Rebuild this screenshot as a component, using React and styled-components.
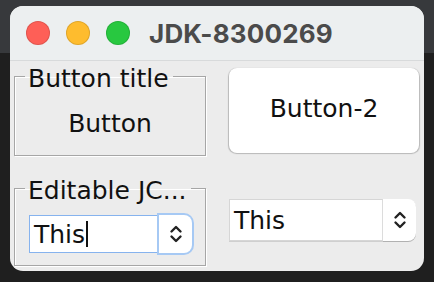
import React from "react";
import styled, { createGlobalStyle } from "styled-components";

const GlobalStyle = createGlobalStyle`
  html, body {
    margin: 0;
    padding: 0;
  }
  body {
    width: 434px;
    height: 282px;
    overflow: hidden;
    background: linear-gradient(#37393c 0, #37393c 53px, #1f1f1f 53px);
  }
  #root {
    padding: 6px 10px 0;
  }
`;

const Window = styled.div`
  width: 414px;
  height: 265px;
  border-radius: 13px;
  overflow: hidden;
  background: #ececec;
  display: flex;
  flex-direction: column;
  font-family: "DejaVu Sans", sans-serif;
  color: #111;
`;

const TitleBar = styled.div`
  height: 54px;
  flex: none;
  background: #eceff0;
  border-bottom: 1px solid #d8dadb;
  display: flex;
  align-items: center;
  padding-left: 16px;
  gap: 16px;
`;

const Light = styled.span`
  width: 24px;
  height: 24px;
  border-radius: 50%;
  background: ${({ color }) => color};
  box-shadow: inset 0 0 0 1px rgba(0, 0, 0, 0.12);
`;

const Title = styled.div`
  margin-left: 3px;
  font-family: Inter, "Liberation Sans", sans-serif;
  font-weight: 700;
  font-size: 26px;
  letter-spacing: 0.2px;
  color: #4b4b4b;
`;

const Content = styled.div`
  flex: 1;
  display: grid;
  grid-template-columns: 192px 190px;
  grid-template-rows: 95px 93px;
  column-gap: 22px;
  row-gap: 17px;
  padding: 0 0 0 4px;
`;

const Group = styled.fieldset`
  margin: 0;
  padding: 0 0 0 10px;
  border: 1px solid #a6a6a6;
  box-shadow: inset 1px 1px 0 #fff, 1px 1px 0 #fff;
  display: flex;
  align-items: flex-start;
  height: ${({ h }) => h}px;
  box-sizing: border-box;
`;

const Legend = styled.legend`
  margin-left: 0;
  padding: 6px 4px 0 3px;
  font-size: 25px;
  line-height: 24px;
  white-space: nowrap;
`;

const PlainButton = styled.div`
  flex: 1;
  margin: 19px 0 0 -10px;
  text-align: center;
  font-size: 25px;
  line-height: 28px;
`;

const CardButton = styled.div`
  margin: 7px 0 0 1px;
  width: 190px;
  height: 85px;
  box-sizing: border-box;
  background: #fff;
  border-radius: 8px;
  box-shadow: 0 0.5px 1px 0.5px rgba(0, 0, 0, 0.22);
  display: flex;
  align-items: center;
  justify-content: center;
  font-size: 25px;
  padding-bottom: 4px;
`;

const Combo = styled.div`
  display: flex;
  height: ${({ h }) => h}px;
  width: ${({ w }) => w}px;
  margin-top: ${({ top }) => top}px;
  margin-left: ${({ left }) => left || 0}px;
`;

const Field = styled.div`
  flex: 1;
  box-sizing: border-box;
  background: #fff;
  border: 1px solid ${({ focus }) => (focus ? "#86b3ee" : "#d6d6d6")};
  border-right: ${({ focus }) => (focus ? "1px solid #86b3ee" : "1px solid #dcdcdc")};
  display: flex;
  align-items: center;
  padding-left: 4px;
  font-size: 25px;
  box-shadow: ${({ focus }) => (focus ? "none" : "0 1px 0 #cfcfcf")};
`;

const Caret = styled.span`
  display: inline-block;
  width: 2px;
  height: 26px;
  margin-left: 1px;
  background: #111;
`;

const Arrow = styled.div`
  width: ${({ w }) => w}px;
  box-sizing: border-box;
  background: #fff;
  border-radius: 0 8px 8px 0;
  display: flex;
  align-items: center;
  justify-content: center;
  box-shadow: ${({ focus }) =>
    focus
      ? "0 0 0 2px #a6c9f4"
      : "0 1px 0.5px rgba(0, 0, 0, 0.25)"};
`;

const Updown = () => (
  <svg width="14" height="20" viewBox="0 0 14 20">
    <path
      d="M2.5 7.5 L7 3 L11.5 7.5 M2.5 12.5 L7 17 L11.5 12.5"
      fill="none"
      stroke="#222"
      strokeWidth="2.4"
      strokeLinecap="round"
      strokeLinejoin="round"
    />
  </svg>
);

export default function App() {
  return (
    <>
      <GlobalStyle />
      <Window>
        <TitleBar>
          <Light color="#fe5f57" />
          <Light color="#febc2e" />
          <Light color="#28c840" />
          <Title>JDK-8300269</Title>
        </TitleBar>
        <Content>
          <Group h={95}>
            <Legend>Button title</Legend>
            <PlainButton>Button</PlainButton>
          </Group>
          <CardButton>Button-2</CardButton>
          <Group h={93}>
            <Legend>Editable JC...</Legend>
            <Combo h={38} w={163} top={12} left={4}>
              <Field focus>
                This
                <Caret />
              </Field>
              <Arrow focus w={33}>
                <Updown />
              </Arrow>
            </Combo>
          </Group>
          <Combo h={42} w={187} top={26} left={1}>
            <Field>This</Field>
            <Arrow w={33}>
              <Updown />
            </Arrow>
          </Combo>
        </Content>
      </Window>
    </>
  );
}
